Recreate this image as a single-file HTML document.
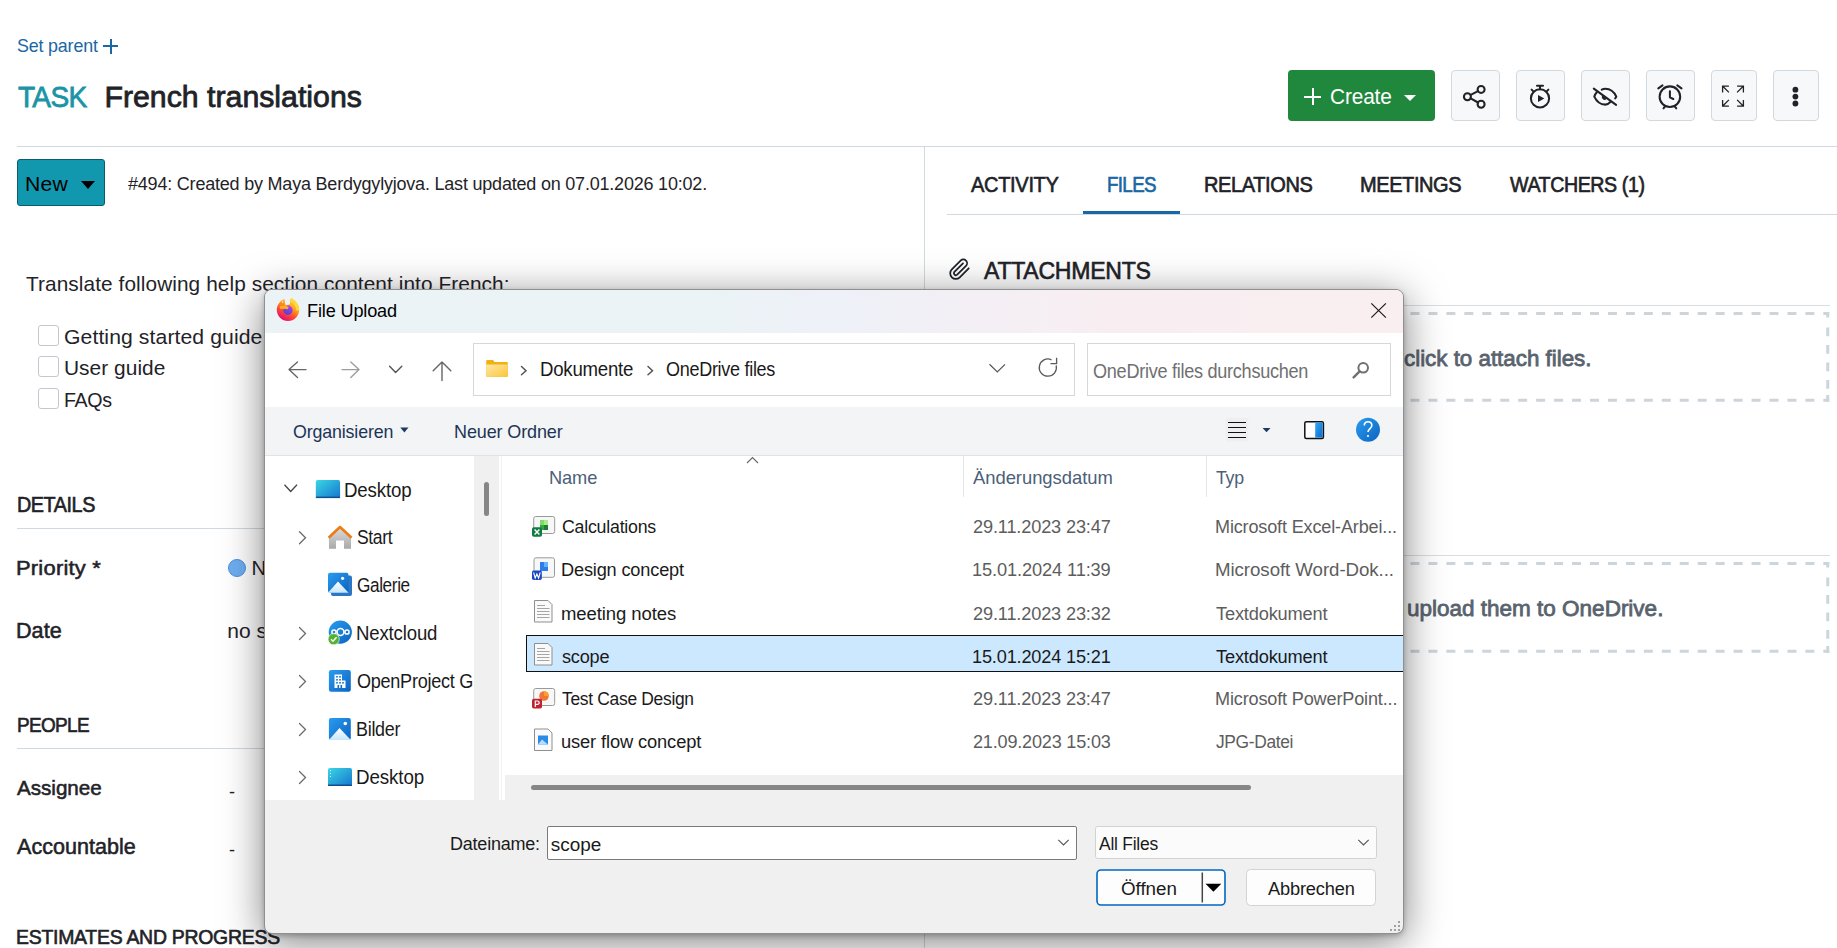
<!DOCTYPE html>
<html><head><meta charset="utf-8"><title>File Upload</title>
<style>
html,body{margin:0;padding:0}
body{width:1837px;height:948px;overflow:hidden;position:relative;background:#fff;font-family:"Liberation Sans",sans-serif}
.t{position:absolute;white-space:pre;font-family:"Liberation Sans",sans-serif}
.a{position:absolute}
.ib{position:absolute;top:70px;width:49px;height:51px;background:#f6f8fa;border:1px solid #d1d9e0;border-radius:4px;box-sizing:border-box}
.ib svg{position:absolute;left:0;top:0}
.cb{position:absolute;left:38px;width:21px;height:21px;box-sizing:border-box;border:1px solid #c2c8ce;border-radius:3px;background:#fff}
.dash{position:absolute;left:947px;width:883px;height:90px;box-sizing:border-box;border:3px dashed #ccd4dc}
#dlg{position:absolute;left:0;top:0;width:1837px;height:948px}
</style></head><body>
<!-- background page -->
<div class="a" style="left:17px;top:146px;width:1820px;height:1px;background:#d1d9e0"></div>
<div class="a" style="left:924px;top:147px;width:1px;height:801px;background:#d1d9e0"></div>
<!-- set parent plus -->
<div class="a" style="left:103px;top:45px;width:15px;height:2px;background:#1a67a3"></div>
<div class="a" style="left:110px;top:39px;width:2px;height:15px;background:#1a67a3"></div>
<!-- New button -->
<div class="a" style="left:17px;top:159px;width:88px;height:47px;box-sizing:border-box;background:#1198af;border:1px solid #0c5d6b;border-radius:3px"></div>
<div class="a" style="left:81px;top:181px;width:0;height:0;border-left:7px solid transparent;border-right:7px solid transparent;border-top:8px solid #000"></div>
<!-- checkboxes -->
<div class="cb" style="top:325px"></div>
<div class="cb" style="top:356px"></div>
<div class="cb" style="top:388px"></div>
<!-- section lines -->
<div class="a" style="left:17px;top:528px;width:890px;height:1px;background:#d1d9e0"></div>
<div class="a" style="left:17px;top:748px;width:890px;height:1px;background:#d1d9e0"></div>
<!-- priority dot -->
<div class="a" style="left:228px;top:559px;width:18px;height:18px;box-sizing:border-box;border-radius:50%;background:#6eaef2;border:1px solid #4a8fdc"></div>
<!-- tabs -->
<div class="a" style="left:947px;top:214px;width:890px;height:1px;background:#d1d9e0"></div>
<div class="a" style="left:1083px;top:211px;width:97px;height:3px;background:#1a67a3"></div>
<!-- paperclip -->
<svg class="a" style="left:0;top:0" width="1000" height="300" viewBox="0 0 1000 300"><path d="M968.7 268.3 L959.76 277.26 A5.6 5.6 0 0 1 951.84 269.34 L960.61 260.57 A3.8 3.8 0 0 1 965.99 265.95 L957.21 274.71 A2 2 0 0 1 954.39 271.89 L963 263.3" fill="none" stroke="#1f2328" stroke-width="1.75" stroke-linecap="round"/></svg>
<!-- attachments areas -->
<div class="a" style="left:947px;top:305px;width:883px;height:1px;background:#d8dee4"></div>
<svg class="a" style="left:0;top:0" width="1837" height="700" viewBox="0 0 1837 700"><g fill="none" stroke="#ccd4dc" stroke-width="3">
<path d="M947 313.5 H1829.25 M947 400.25 H1829.25" stroke-dasharray="8.97 8.98" stroke-dashoffset="-463.5"/>
<path d="M1827.75 312 V402" stroke-dasharray="5.5 10 8.75 8.75 8.75 8.75 8.75 8.75 8.75 6.25 7"/>
<path d="M947 563.5 H1829.25 M947 651.25 H1829.25" stroke-dasharray="8.97 8.98" stroke-dashoffset="-463.5"/>
<path d="M1827.75 562 V653" stroke-dasharray="5.5 10 8.75 8.75 8.75 8.75 8.75 8.75 8.75 7.25 7"/>
</g></svg>
<div class="a" style="left:947px;top:555px;width:883px;height:1px;background:#d8dee4"></div>

<!-- Create button -->
<div class="a" style="left:1288px;top:70px;width:147px;height:51px;background:#1f883d;border-radius:4px"></div>
<div class="a" style="left:1304px;top:96px;width:17px;height:2px;background:#fff"></div>
<div class="a" style="left:1311.5px;top:88px;width:2px;height:17px;background:#fff"></div>
<div class="a" style="left:1404px;top:95px;width:0;height:0;border-left:6px solid transparent;border-right:6px solid transparent;border-top:6px solid #fff"></div>
<!-- icon buttons -->
<div class="ib" style="left:1450.5px;width:49.5px"></div>
<div class="ib" style="left:1515.5px;width:49.5px"></div>
<div class="ib" style="left:1580.5px;width:49.5px"></div>
<div class="ib" style="left:1645.5px;width:49.5px"></div>
<div class="ib" style="left:1710.5px;width:46.5px"></div>
<div class="ib" style="left:1772.5px;width:46px"></div>
<svg class="a" style="left:0;top:0" width="1837" height="150" viewBox="0 0 1837 150">
<g fill="none" stroke="#1f2328" stroke-width="2.05" stroke-linecap="round" stroke-linejoin="round">
 <circle cx="1467.4" cy="96.7" r="3.5"/><circle cx="1481.1" cy="89.4" r="3.5"/><circle cx="1481.1" cy="104.3" r="3.5"/>
 <path d="M1470.7 94.9 L1478 91.1 M1470.7 98.3 L1478 102.5"/>
 <circle cx="1540" cy="98.4" r="9.1"/>
 <path d="M1537 85.8 H1543 M1540 85.8 V89.2 M1531.6 89.6 L1533.6 91.6 M1548.4 89.6 L1546.4 91.6"/>
 <path d="M1593.8 88.6 L1616.1 104.9"/>
 <path d="M1596.8 92.2 C1595.6 93.5 1594.8 95 1594.3 96.6 C1596.6 101.5 1600.8 104.6 1605.3 104.6 C1607.4 104.6 1609.2 103.2 1610.6 101.7"/>
 <path d="M1601.8 89.7 C1603 89 1604.2 88.7 1605.3 88.7 C1610 88.7 1614.2 92 1616.3 96.6 C1616 97.3 1615.6 97.9 1615.2 98.4"/>
 <circle cx="1669.9" cy="96.7" r="10.3"/>
 <path d="M1658.3 88.4 L1662.5 85.4 M1681.5 88.4 L1677.3 85.4 M1663.5 108.3 L1665.3 106.2 M1676.3 108.3 L1674.5 106.2 M1669.9 91.2 V97.3 L1673.3 99"/>
</g>
<path d="M1538 95 L1544.3 98.5 L1538 102 Z" fill="#1f2328"/>
<path d="M1602.4 95.6 A2.6 2.6 0 0 0 1606.6 98.7 Z" fill="#1f2328"/>
<g fill="none" stroke="#1f2328" stroke-width="1.3" stroke-linecap="butt">
 <path d="M1722.6 92.4 V86.1 H1728.9 M1723 86.5 L1728.9 92.4"/>
 <path d="M1743.4 92.4 V86.1 H1737.1 M1743 86.5 L1737.1 92.4"/>
 <path d="M1722.6 99.9 V106.2 H1728.9 M1723 105.8 L1728.9 99.9"/>
 <path d="M1743.4 99.9 V106.2 H1737.1 M1743 105.8 L1737.1 99.9"/>
</g>
<g fill="#1f2328"><circle cx="1795.4" cy="89.7" r="2.9"/><circle cx="1795.4" cy="96.6" r="2.9"/><circle cx="1795.4" cy="103.5" r="2.9"/></g>
</svg>
<div class="t" style="left:17.20px;top:37.10px;font-size:18.57px;line-height:18.57px;color:#1a67a3;letter-spacing:-0.160px;transform:scaleX(0.9605);transform-origin:0 0;">Set parent</div>
<div class="t" style="left:17.60px;top:82.12px;font-size:30.29px;line-height:30.29px;color:#1a94a6;letter-spacing:-0.764px;transform:scaleX(0.9280);transform-origin:0 0;-webkit-text-stroke:0.8px #1a94a6;">TASK</div>
<div class="t" style="left:104.40px;top:82.12px;font-size:30.29px;line-height:30.29px;color:#1f2328;-webkit-text-stroke:0.8px #1f2328;">French translations</div>
<div class="t" style="left:24.58px;top:173.76px;font-size:20.71px;line-height:20.71px;color:#000;letter-spacing:0.200px;transform:scaleX(1.0229);transform-origin:0 0;">New</div>
<div class="t" style="left:128.10px;top:174.21px;font-size:19.14px;line-height:19.14px;color:#1f2328;letter-spacing:-0.223px;transform:scaleX(0.9415);transform-origin:0 0;">#494: Created by Maya Berdygylyjova. Last updated on 07.01.2026 10:02.</div>
<div class="t" style="left:25.60px;top:274.26px;font-size:20.36px;line-height:20.36px;color:#1f2328;letter-spacing:0.084px;transform:scaleX(1.0216);transform-origin:0 0;">Translate following help section content into French:</div>
<div class="t" style="left:63.58px;top:326.76px;font-size:20.71px;line-height:20.71px;color:#1f2328;letter-spacing:0.092px;transform:scaleX(1.0222);transform-origin:0 0;">Getting started guide</div>
<div class="t" style="left:63.59px;top:358.26px;font-size:20.71px;line-height:20.71px;color:#1f2328;letter-spacing:0.040px;transform:scaleX(1.0085);transform-origin:0 0;">User guide</div>
<div class="t" style="left:63.65px;top:390.01px;font-size:20.71px;line-height:20.71px;color:#1f2328;letter-spacing:-0.362px;transform:scaleX(0.9487);transform-origin:0 0;">FAQs</div>
<div class="t" style="left:16.50px;top:495.00px;font-size:21.43px;line-height:21.43px;color:#1f2328;letter-spacing:-0.463px;transform:scaleX(0.9225);transform-origin:0 0;-webkit-text-stroke:0.65px #1f2328;">DETAILS</div>
<div class="t" style="left:16.32px;top:558.01px;font-size:20.71px;line-height:20.71px;color:#1f2328;letter-spacing:0.219px;transform:scaleX(1.0582);transform-origin:0 0;-webkit-text-stroke:0.55px #1f2328;">Priority *</div>
<div class="t" style="left:251.60px;top:557.51px;font-size:20.36px;line-height:20.36px;color:#1f2328;">N</div>
<div class="t" style="left:16.37px;top:620.50px;font-size:21.43px;line-height:21.43px;color:#1f2328;letter-spacing:0.041px;transform:scaleX(1.0067);transform-origin:0 0;-webkit-text-stroke:0.55px #1f2328;">Date</div>
<div class="t" style="left:227.35px;top:619.50px;font-size:21px;line-height:21px;color:#1f2328;">no s</div>
<div class="t" style="left:16.53px;top:713.75px;font-size:21.07px;line-height:21.07px;color:#1f2328;letter-spacing:-0.696px;transform:scaleX(0.8983);transform-origin:0 0;-webkit-text-stroke:0.65px #1f2328;">PEOPLE</div>
<div class="t" style="left:17.38px;top:778.01px;font-size:20.71px;line-height:20.71px;color:#1f2328;letter-spacing:-0.017px;transform:scaleX(0.9967);transform-origin:0 0;-webkit-text-stroke:0.55px #1f2328;">Assignee</div>
<div class="t" style="left:229.10px;top:782.81px;font-size:18px;line-height:18px;color:#1f2328;">-</div>
<div class="t" style="left:17.38px;top:836.75px;font-size:21.43px;line-height:21.43px;color:#1f2328;letter-spacing:0.023px;transform:scaleX(1.0045);transform-origin:0 0;-webkit-text-stroke:0.55px #1f2328;">Accountable</div>
<div class="t" style="left:229.10px;top:841.31px;font-size:18px;line-height:18px;color:#1f2328;">-</div>
<div class="t" style="left:16.47px;top:926.76px;font-size:20.36px;line-height:20.36px;color:#1f2328;letter-spacing:-0.262px;transform:scaleX(0.9536);transform-origin:0 0;-webkit-text-stroke:0.65px #1f2328;">ESTIMATES AND PROGRESS</div>
<div class="t" style="left:971.18px;top:175.00px;font-size:21.43px;line-height:21.43px;color:#1f2328;letter-spacing:-0.363px;transform:scaleX(0.9366);transform-origin:0 0;-webkit-text-stroke:0.65px #1f2328;">ACTIVITY</div>
<div class="t" style="left:1107.05px;top:175.00px;font-size:21.43px;line-height:21.43px;color:#1a67a3;letter-spacing:-0.738px;transform:scaleX(0.8754);transform-origin:0 0;-webkit-text-stroke:0.65px #1a67a3;">FILES</div>
<div class="t" style="left:1203.99px;top:175.00px;font-size:21.43px;line-height:21.43px;color:#1f2328;letter-spacing:-0.408px;transform:scaleX(0.9339);transform-origin:0 0;-webkit-text-stroke:0.65px #1f2328;">RELATIONS</div>
<div class="t" style="left:1359.99px;top:175.00px;font-size:21.43px;line-height:21.43px;color:#1f2328;letter-spacing:-0.437px;transform:scaleX(0.9337);transform-origin:0 0;-webkit-text-stroke:0.65px #1f2328;">MEETINGS</div>
<div class="t" style="left:1510.42px;top:175.00px;font-size:21.43px;line-height:21.43px;color:#1f2328;letter-spacing:-0.472px;transform:scaleX(0.9171);transform-origin:0 0;-webkit-text-stroke:0.65px #1f2328;">WATCHERS (1)</div>
<div class="t" style="left:983.65px;top:258.75px;font-size:23.93px;line-height:23.93px;color:#1f2328;letter-spacing:-0.269px;transform:scaleX(0.9636);transform-origin:0 0;-webkit-text-stroke:0.6px #1f2328;">ATTACHMENTS</div>
<div class="t" style="left:1404.25px;top:347.51px;font-size:22.5px;line-height:22.5px;color:#59636e;letter-spacing:-0.019px;transform:scaleX(0.9951);transform-origin:0 0;-webkit-text-stroke:0.8px #59636e;">click to attach files.</div>
<div class="t" style="left:1407.00px;top:597.60px;font-size:22.5px;line-height:22.5px;color:#59636e;-webkit-text-stroke:0.8px #59636e;">upload them to OneDrive.</div>
<div class="t" style="left:1330.43px;top:87.00px;font-size:21.43px;line-height:21.43px;color:#fff;letter-spacing:-0.143px;transform:scaleX(0.9729);transform-origin:0 0;">Create</div>
<!-- ============ dialog ============ -->
<div id="dlg">
<div class="a" style="left:264px;top:289px;width:1140px;height:645px;box-sizing:border-box;border:1px solid #8f8f8f;border-radius:8px;background:#f0f0f0;overflow:hidden;box-shadow:0 8px 40px rgba(0,0,0,.5),0 2px 5px rgba(0,0,0,.22)">
  <!-- title bar -->
  <div class="a" style="left:0;top:0;width:1138px;height:43px;background:linear-gradient(90deg,#ebf3f6 0%,#ebf3f6 38%,#eef1f8 50%,#f3eff5 62%,#f8eef2 74%,#f9eff0 100%)"></div>
  <!-- nav bar -->
  <div class="a" style="left:0;top:43px;width:1138px;height:74px;background:#fff"></div>
  <!-- command bar -->
  <div class="a" style="left:0;top:117px;width:1138px;height:48px;background:#f3f4f6;border-bottom:1px solid #e3e3e3"></div>
  <!-- nav pane -->
  <div class="a" style="left:0;top:166px;width:209px;height:344px;background:#fff"></div>
  <div class="a" style="left:209px;top:166px;width:25px;height:344px;background:#f0f0f0"></div>
  <div class="a" style="left:219px;top:192px;width:5px;height:34px;background:#868686;border-radius:3px"></div>
  <!-- file list -->
  <div class="a" style="left:234px;top:166px;width:904px;height:319px;background:#fff"></div>
  <div class="a" style="left:234px;top:485px;width:6px;height:25px;background:#fff"></div>
  <div class="a" style="left:236px;top:166px;width:1px;height:344px;background:#f2f2f2"></div>
  <div class="a" style="left:266px;top:495px;width:720px;height:5px;background:#868686;border-radius:3px"></div>
  <div class="a" style="left:698px;top:166px;width:1px;height:41px;background:#e5e5e5"></div>
  <div class="a" style="left:941px;top:166px;width:1px;height:41px;background:#e5e5e5"></div>
  <!-- selection -->
  <div class="a" style="left:261px;top:345px;width:900px;height:37px;box-sizing:border-box;background:#cce8ff;border:1px solid #111"></div>
</div>
<svg class="a" style="left:0;top:0" width="1837" height="948" viewBox="0 0 1837 948">
<defs>
 <radialGradient id="ffring" cx="0.45" cy="0.6" r="0.6"><stop offset="0" stop-color="#ff9a1f"/><stop offset="0.7" stop-color="#ff4a2a"/><stop offset="1" stop-color="#e5216a"/></radialGradient>
 <linearGradient id="ffflame" x1="0" y1="0" x2="0" y2="1"><stop offset="0" stop-color="#ffe640"/><stop offset="1" stop-color="#ffa318"/></linearGradient>
 <radialGradient id="ffcore" cx="0.5" cy="0.4" r="0.6"><stop offset="0" stop-color="#9059ff"/><stop offset="1" stop-color="#6a3ad0"/></radialGradient>
 <linearGradient id="desk" x1="0" y1="0" x2="1" y2="1"><stop offset="0" stop-color="#3ad6e4"/><stop offset="1" stop-color="#1676cf"/></linearGradient>
 <linearGradient id="blueg" x1="0" y1="0" x2="1" y2="1"><stop offset="0" stop-color="#2a9cf0"/><stop offset="1" stop-color="#0b63c0"/></linearGradient>
 <linearGradient id="houseg" x1="0" y1="0" x2="0" y2="1"><stop offset="0" stop-color="#dcdcdc"/><stop offset="1" stop-color="#a9a9a9"/></linearGradient>
 <linearGradient id="folderg" x1="0" y1="0" x2="1" y2="1"><stop offset="0" stop-color="#fde7a6"/><stop offset="1" stop-color="#fcc63a"/></linearGradient>
 <linearGradient id="mtn" x1="0" y1="0" x2="0" y2="1"><stop offset="0" stop-color="#ffffff"/><stop offset="1" stop-color="#c9e6fb"/></linearGradient>
 <linearGradient id="pane" x1="0" y1="0" x2="1" y2="1"><stop offset="0" stop-color="#35a9f2"/><stop offset="1" stop-color="#0a6acd"/></linearGradient>
</defs>
<!-- firefox -->
<defs>
 <linearGradient id="ffr" x1="0.85" y1="0.05" x2="0.3" y2="0.95"><stop offset="0" stop-color="#ffe54a"/><stop offset="0.38" stop-color="#ffa01c"/><stop offset="0.68" stop-color="#ff4a35"/><stop offset="1" stop-color="#e2106c"/></linearGradient>
 <linearGradient id="ffc" x1="0.7" y1="0" x2="0.3" y2="1"><stop offset="0" stop-color="#b43ee8"/><stop offset="1" stop-color="#5240cf"/></linearGradient>
</defs>
<circle cx="288" cy="309.8" r="11.2" fill="url(#ffr)"/>
<path d="M284.3 298 L290.6 298 C290 300.5 289.8 302.5 290 304.3 C288.5 304.6 287 304.8 285.6 305.4 C285.2 303.5 284.8 301.5 284.3 298 Z" fill="#ecf3f8"/><path d="M281.8 299.5 L283.2 302.8 L282 303.2 Z" fill="#ecf3f8"/>
<path d="M291.3 298 C295.5 300.5 299.6 305 299.2 310.5 L296.3 310.5 C296 306 293.8 303 290.2 302 C290 300.5 290.5 299 291.3 298 Z" fill="#ffd83c"/>
<circle cx="287.9" cy="310.3" r="4.7" fill="url(#ffc)"/>
<path d="M279.6 306.6 C282 305.6 286 305.4 288.8 307.2 L287.6 309.3 C285.6 308.6 282.5 308.6 280.3 309.2 Z" fill="#ffb01e"/>
<path d="M279.6 303.2 L280.4 301.5 L281.6 303.5 L283.2 302.8 L284 304.8 L280 306 Z" fill="#ff8a10"/>
<!-- close X -->
<path d="M1371.3 303.4 L1385.9 317.6 M1385.9 303.4 L1371.3 317.6" stroke="#1a1a1a" stroke-width="1.2"/>
<!-- nav arrows -->
<g fill="none" stroke-width="1.4" stroke-linecap="round" stroke-linejoin="round">
 <path d="M289 369.6 H306 M297.5 362 L289 369.6 L297.5 377.5" stroke="#666"/>
 <path d="M342 369.6 H359 M350.8 362 L359 369.6 L350.8 377.5" stroke="#9d9d9d"/>
 <path d="M389.6 366.3 L395.6 372.5 L401.8 366.3" stroke="#555"/>
 <path d="M442 362 V380.5 M433.2 370.8 L442 362 L450.8 370.8" stroke="#666"/>
</g>
<!-- address box & search box -->
<rect x="473.5" y="343.5" width="601" height="52" fill="#fff" stroke="#d7d7d7"/>
<rect x="1087.5" y="343.5" width="303" height="52" fill="#fff" stroke="#d7d7d7"/>
<!-- folder -->
<path d="M486.2 361 a1 1 0 0 1 1 -1 H493 l1.6 2 H507 a0.8 0.8 0 0 1 0.8 0.8 V376 a0.8 0.8 0 0 1 -0.8 0.8 H487 a0.8 0.8 0 0 1 -0.8 -0.8 Z" fill="#f3b10f"/>
<path d="M486.2 364.5 H507.8 V376 a0.8 0.8 0 0 1 -0.8 0.8 H487 a0.8 0.8 0 0 1 -0.8 -0.8 Z" fill="url(#folderg)"/>
<g fill="none" stroke="#555" stroke-width="1.5" stroke-linecap="round">
 <path d="M521.5 366.5 L526 370.7 L521.5 374.8"/>
 <path d="M648 366.5 L652.5 370.7 L648 374.8"/>
</g>
<path d="M989.5 364.3 L997.3 372 L1005 364.3" fill="none" stroke="#555" stroke-width="1.2"/>
<path d="M1056.2 365.5 A8.6 8.6 0 1 1 1051.5 359.8" fill="none" stroke="#5a5a5a" stroke-width="1.3"/>
<path d="M1050.5 363.6 H1056.6 V357.8" fill="none" stroke="#5a5a5a" stroke-width="1.3"/>
<circle cx="1363.2" cy="367.8" r="4.8" fill="none" stroke="#707070" stroke-width="2"/>
<path d="M1359.6 371.4 L1353.6 377.4" stroke="#707070" stroke-width="2.4" stroke-linecap="round"/>
<!-- command bar icons -->
<path d="M400.3 427.6 H408.5 L404.4 432.6 Z" fill="#1f3a60"/>
<rect x="1225.5" y="417.5" width="23" height="24" rx="3" fill="#efeff1"/>
<path d="M1228 422.5 H1246 M1228 427.5 H1246 M1228 432.5 H1246 M1228 437.5 H1246" stroke="#111" stroke-width="1.1"/>
<path d="M1262.6 427.9 H1270.5 L1266.55 432.3 Z" fill="#1f3a60"/>
<rect x="1304.8" y="421.8" width="18.6" height="16.6" rx="1.5" fill="#fff" stroke="#111" stroke-width="1.5"/>
<rect x="1315.2" y="422.6" width="7.4" height="15" fill="url(#pane)"/>
<path d="M1315 422.5 V438" stroke="#111" stroke-width="0"/>
<circle cx="1368" cy="429.8" r="12" fill="url(#blueg)"/>
<path d="M1364.3 425.5 C1364.3 420.5 1371.8 420.5 1371.8 425.5 C1371.8 428.5 1368 428.8 1368 432" fill="none" stroke="#fff" stroke-width="1.6"/>
<circle cx="1368" cy="436" r="1.1" fill="#fff"/>
<!-- nav pane -->
<path d="M284.5 484.8 L290.7 491.5 L297 484.8" fill="none" stroke="#444" stroke-width="1.3"/>
<g fill="none" stroke="#6a6a6a" stroke-width="1.3" stroke-linecap="round">
 <path d="M299.5 531.8 L305.5 537.8 L299.5 543.8"/>
 <path d="M299.5 627.5 L305.5 633.5 L299.5 639.5"/>
 <path d="M299.5 675.5 L305.5 681.5 L299.5 687.5"/>
 <path d="M299.5 723.5 L305.5 729.5 L299.5 735.5"/>
 <path d="M299.5 771.5 L305.5 777.5 L299.5 783.5"/>
</g>
<rect x="315.8" y="480" width="24.3" height="18" rx="2" fill="url(#desk)"/>
<rect x="315.8" y="496.6" width="24.3" height="1.5" fill="#0e4f90"/>
<!-- home -->
<path d="M329 536.5 V548.8 H336 V540.5 H344 V548.8 H351 V536.5 L340 527.5 Z" fill="url(#houseg)"/>
<path d="M328.6 537.8 L340 527 L351.6 537.8" fill="none" stroke="#ee7b14" stroke-width="2.6" stroke-linejoin="round"/>
<!-- galerie -->
<rect x="331" y="575.5" width="21" height="20.5" rx="2" fill="#2b77c6"/>
<rect x="328" y="572.7" width="20.5" height="20" rx="2" fill="url(#blueg)"/>
<path d="M328 592.7 L338 581.5 L348.5 592.7 Z" fill="url(#mtn)"/>
<circle cx="342.6" cy="578.3" r="1.6" fill="#fff"/>
<!-- nextcloud -->
<circle cx="340.3" cy="632.1" r="11.6" fill="url(#blueg)"/>
<g fill="none" stroke="#fff" stroke-width="1.5"><circle cx="340.5" cy="632" r="3.4"/><circle cx="334" cy="632" r="2.1"/><circle cx="347" cy="632" r="2.1"/></g>
<circle cx="333.7" cy="639.2" r="5.6" fill="#56b132" stroke="#fff" stroke-width="0.6"/>
<path d="M331 639.3 L333 641.3 L336.6 637.3" fill="none" stroke="#fff" stroke-width="1.3"/>
<!-- openproject -->
<rect x="328.9" y="670.1" width="21.9" height="21.6" rx="2.2" fill="url(#blueg)"/>
<path d="M334.5 674.5 H342 V680.5 H345.5 V688 H334.5 Z" fill="#fff"/>
<g fill="#1272c8"><rect x="336.2" y="676" width="1.6" height="1.6"/><rect x="339.2" y="676" width="1.6" height="1.6"/><rect x="336.2" y="679" width="1.6" height="1.6"/><rect x="339.2" y="679" width="1.6" height="1.6"/><rect x="336.2" y="682" width="1.6" height="1.6"/><rect x="339.2" y="682" width="1.6" height="1.6"/><rect x="342.2" y="682" width="1.6" height="1.6"/><rect x="337.5" y="685" width="1.6" height="3"/><rect x="340.5" y="685" width="1.6" height="3"/></g>
<!-- bilder -->
<rect x="328.9" y="718" width="21.9" height="22" rx="2" fill="url(#blueg)"/>
<path d="M328.9 740 L339.5 728 L350.8 740 Z" fill="url(#mtn)"/>
<circle cx="345.3" cy="723.5" r="1.8" fill="#fff"/>
<!-- desktop 2 -->
<rect x="328" y="768" width="24" height="18" rx="2" fill="url(#desk)"/>
<rect x="328" y="784.5" width="24" height="1.5" fill="#0e4f90"/>
<g fill="#fff"><rect x="330" y="770" width="1" height="1"/><rect x="330" y="773" width="1" height="1"/><rect x="330" y="776" width="1" height="1"/></g>
<!-- sort caret -->
<path d="M747 463 L752.5 457.5 L758 463" fill="none" stroke="#666" stroke-width="1.1"/>
<!-- file icons -->
<g>
 <rect x="533.7" y="516.5" width="21" height="17" rx="2" fill="#f7f7f7" stroke="#9a9a9a"/>
 <rect x="540" y="520" width="4" height="5" fill="#7fdc6a"/><rect x="544" y="520" width="4" height="5" fill="#a7ef85"/><rect x="540" y="525" width="4" height="5" fill="#33a845"/><rect x="544" y="525" width="4" height="5" fill="#1e7d35"/>
 <rect x="532" y="527.2" width="10" height="9.6" rx="1.8" fill="#107c41"/>
 <path d="M534.6 529.5 L539.4 534.5 M539.4 529.5 L534.6 534.5" stroke="#fff" stroke-width="1.4"/>
</g>
<g>
 <rect x="534" y="557.8" width="20.5" height="19.5" rx="2" fill="#f7f7f7" stroke="#9a9a9a"/>
 <rect x="540" y="562" width="8" height="9" fill="#2f7ce8"/><rect x="544" y="562" width="4" height="5" fill="#5fb4ff"/>
 <rect x="532" y="570.5" width="9.8" height="9.5" rx="1.8" fill="#1847c2"/>
 <path d="M533.6 572.5 L535.2 578 L536.9 574 L538.6 578 L540.2 572.5" fill="none" stroke="#fff" stroke-width="1.1"/>
</g>
<g id="txtdoc">
 <path d="M534.5 600.5 H548 L552 604.5 V622 H534.5 Z" fill="#fafafa" stroke="#8f8f8f"/>
 <path d="M537 605.5 H545 M537 608.5 H549.5 M537 611.5 H549.5 M537 614.5 H549.5 M537 617.5 H549.5" stroke="#a5a5a5" stroke-width="1"/>
</g>
<g transform="translate(0,43)">
 <path d="M534.5 600.5 H548 L552 604.5 V622 H534.5 Z" fill="#fafafa" stroke="#8f8f8f"/>
 <path d="M537 605.5 H545 M537 608.5 H549.5 M537 611.5 H549.5 M537 614.5 H549.5 M537 617.5 H549.5" stroke="#a5a5a5" stroke-width="1"/>
</g>
<g>
 <rect x="533.7" y="688.5" width="21" height="17" rx="2" fill="#f7f7f7" stroke="#9a9a9a"/>
 <circle cx="544" cy="696" r="4.8" fill="#f3743a"/><path d="M544 696 V691.2 A4.8 4.8 0 0 1 548.8 696 Z" fill="#ff9f2a"/>
 <rect x="532" y="698.8" width="10" height="9.8" rx="1.8" fill="#c0232f"/>
 <path d="M535.3 707 V701 H537.5 A1.7 1.7 0 0 1 537.5 704.4 H535.3" fill="none" stroke="#fff" stroke-width="1.2"/>
</g>
<g>
 <path d="M534.5 729 H548 L552 733 V750.5 H534.5 Z" fill="#fafafa" stroke="#8f8f8f"/>
 <rect x="538" y="735.5" width="10" height="9" fill="#2a8be6"/>
 <path d="M538 744.5 L542 739.5 L548 744.5 Z" fill="#b8ddfb"/>
</g>
<!-- bottom inputs -->
<rect x="547.5" y="826.5" width="529" height="33" rx="1.5" fill="#fff" stroke="#7a7a7a"/>
<path d="M1058.3 839.8 L1063.5 845 L1068.7 839.8" fill="none" stroke="#555" stroke-width="1.1"/>
<rect x="1095.5" y="826.5" width="281" height="32" rx="2" fill="#fbfbfb" stroke="#d2d2d2"/>
<path d="M1358.3 839.8 L1363.5 845 L1368.7 839.8" fill="none" stroke="#555" stroke-width="1.1"/>
<rect x="1097" y="870" width="128" height="35" rx="4" fill="#fdfdfd" stroke="#0067c0" stroke-width="1.6"/>
<path d="M1202.3 872.5 V902.5" stroke="#444" stroke-width="1.5"/>
<path d="M1205.5 883.8 H1221.3 L1213.4 891.8 Z" fill="#000"/>
<rect x="1246.5" y="869.5" width="129" height="36" rx="4" fill="#fdfdfd" stroke="#d3d3d3"/>
<g fill="#a0a0a0"><rect x="1398" y="921" width="2" height="2"/><rect x="1398" y="925" width="2" height="2"/><rect x="1394" y="925" width="2" height="2"/><rect x="1398" y="929" width="2" height="2"/><rect x="1394" y="929" width="2" height="2"/><rect x="1390" y="929" width="2" height="2"/></g>
</svg>

<div class="t" style="left:307.39px;top:302.00px;font-size:18.93px;line-height:18.93px;color:#000;letter-spacing:-0.166px;transform:scaleX(0.9581);transform-origin:0 0;">File Upload</div>
<div class="t" style="left:539.65px;top:360.26px;font-size:19.64px;line-height:19.64px;color:#1a1a1a;letter-spacing:-0.258px;transform:scaleX(0.9504);transform-origin:0 0;">Dokumente</div>
<div class="t" style="left:666.10px;top:360.26px;font-size:19.64px;line-height:19.64px;color:#1a1a1a;letter-spacing:-0.321px;transform:scaleX(0.9182);transform-origin:0 0;">OneDrive files</div>
<div class="t" style="left:1093.35px;top:361.51px;font-size:19.64px;line-height:19.64px;color:#707070;letter-spacing:-0.307px;transform:scaleX(0.9229);transform-origin:0 0;">OneDrive files durchsuchen</div>
<div class="t" style="left:293.10px;top:423.01px;font-size:18.57px;line-height:18.57px;color:#1c3557;letter-spacing:-0.161px;transform:scaleX(0.9604);transform-origin:0 0;">Organisieren</div>
<div class="t" style="left:453.88px;top:423.01px;font-size:18.57px;line-height:18.57px;color:#1c3557;letter-spacing:-0.130px;transform:scaleX(0.9700);transform-origin:0 0;">Neuer Ordner</div>
<div class="t" style="left:344.38px;top:480.51px;font-size:19.29px;line-height:19.29px;color:#1a1a1a;letter-spacing:-0.148px;transform:scaleX(0.9696);transform-origin:0 0;">Desktop</div>
<div class="t" style="left:357.10px;top:527.76px;font-size:19.29px;line-height:19.29px;color:#1a1a1a;letter-spacing:-0.387px;transform:scaleX(0.9092);transform-origin:0 0;">Start</div>
<div class="t" style="left:357.10px;top:576.01px;font-size:19.29px;line-height:19.29px;color:#1a1a1a;letter-spacing:-0.447px;transform:scaleX(0.8936);transform-origin:0 0;">Galerie</div>
<div class="t" style="left:356.14px;top:624.01px;font-size:19.29px;line-height:19.29px;color:#1a1a1a;letter-spacing:-0.158px;transform:scaleX(0.9643);transform-origin:0 0;">Nextcloud</div>
<div class="t" style="left:357.10px;top:672.01px;font-size:19.29px;line-height:19.29px;color:#1a1a1a;letter-spacing:-0.281px;transform:scaleX(0.9362);transform-origin:0 0;clip-path:inset(-10px calc(100% - 124.3px) -10px -10px);">OpenProject G</div>
<div class="t" style="left:356.17px;top:720.26px;font-size:19.29px;line-height:19.29px;color:#1a1a1a;letter-spacing:-0.286px;transform:scaleX(0.9296);transform-origin:0 0;">Bilder</div>
<div class="t" style="left:356.13px;top:768.26px;font-size:19.29px;line-height:19.29px;color:#1a1a1a;letter-spacing:-0.125px;transform:scaleX(0.9743);transform-origin:0 0;">Desktop</div>
<div class="t" style="left:549.12px;top:469.26px;font-size:18.57px;line-height:18.57px;color:#4c6079;letter-spacing:-0.114px;transform:scaleX(0.9833);transform-origin:0 0;">Name</div>
<div class="t" style="left:972.60px;top:469.26px;font-size:18.57px;line-height:18.57px;color:#4c6079;letter-spacing:-0.037px;transform:scaleX(0.9920);transform-origin:0 0;">Änderungsdatum</div>
<div class="t" style="left:1216.10px;top:469.26px;font-size:18.57px;line-height:18.57px;color:#4c6079;letter-spacing:-0.269px;transform:scaleX(0.9567);transform-origin:0 0;">Typ</div>
<div class="t" style="left:562.10px;top:518.25px;font-size:18.93px;line-height:18.93px;color:#1a1a1a;letter-spacing:-0.240px;transform:scaleX(0.9383);transform-origin:0 0;">Calculations</div>
<div class="t" style="left:972.60px;top:518.25px;font-size:18.93px;line-height:18.93px;color:#5d5d5d;letter-spacing:-0.162px;transform:scaleX(0.9604);transform-origin:0 0;">29.11.2023 23:47</div>
<div class="t" style="left:1215.15px;top:518.25px;font-size:18.93px;line-height:18.93px;color:#5d5d5d;letter-spacing:-0.161px;transform:scaleX(0.9541);transform-origin:0 0;">Microsoft Excel-Arbei...</div>
<div class="t" style="left:561.14px;top:561.25px;font-size:18.93px;line-height:18.93px;color:#1a1a1a;letter-spacing:-0.170px;transform:scaleX(0.9597);transform-origin:0 0;">Design concept</div>
<div class="t" style="left:971.63px;top:561.25px;font-size:18.93px;line-height:18.93px;color:#5d5d5d;letter-spacing:-0.142px;transform:scaleX(0.9652);transform-origin:0 0;">15.01.2024 11:39</div>
<div class="t" style="left:1215.11px;top:561.25px;font-size:18.93px;line-height:18.93px;color:#5d5d5d;letter-spacing:-0.053px;transform:scaleX(0.9862);transform-origin:0 0;">Microsoft Word-Dok...</div>
<div class="t" style="left:561.12px;top:604.50px;font-size:18.93px;line-height:18.93px;color:#1a1a1a;letter-spacing:-0.090px;transform:scaleX(0.9783);transform-origin:0 0;">meeting notes</div>
<div class="t" style="left:972.60px;top:604.50px;font-size:18.93px;line-height:18.93px;color:#5d5d5d;letter-spacing:-0.162px;transform:scaleX(0.9604);transform-origin:0 0;">29.11.2023 23:32</div>
<div class="t" style="left:1216.10px;top:604.50px;font-size:18.93px;line-height:18.93px;color:#5d5d5d;letter-spacing:-0.170px;transform:scaleX(0.9625);transform-origin:0 0;">Textdokument</div>
<div class="t" style="left:562.10px;top:647.50px;font-size:18.93px;line-height:18.93px;color:#1a1a1a;letter-spacing:-0.219px;transform:scaleX(0.9584);transform-origin:0 0;">scope</div>
<div class="t" style="left:971.64px;top:647.50px;font-size:18.93px;line-height:18.93px;color:#1a1a1a;letter-spacing:-0.170px;transform:scaleX(0.9585);transform-origin:0 0;">15.01.2024 15:21</div>
<div class="t" style="left:1216.10px;top:647.50px;font-size:18.93px;line-height:18.93px;color:#1a1a1a;letter-spacing:-0.170px;transform:scaleX(0.9625);transform-origin:0 0;">Textdokument</div>
<div class="t" style="left:562.10px;top:690.25px;font-size:18.93px;line-height:18.93px;color:#1a1a1a;letter-spacing:-0.324px;transform:scaleX(0.9206);transform-origin:0 0;">Test Case Design</div>
<div class="t" style="left:972.60px;top:690.25px;font-size:18.93px;line-height:18.93px;color:#5d5d5d;letter-spacing:-0.162px;transform:scaleX(0.9604);transform-origin:0 0;">29.11.2023 23:47</div>
<div class="t" style="left:1215.14px;top:690.25px;font-size:18.93px;line-height:18.93px;color:#5d5d5d;letter-spacing:-0.163px;transform:scaleX(0.9555);transform-origin:0 0;">Microsoft PowerPoint...</div>
<div class="t" style="left:561.13px;top:733.00px;font-size:18.93px;line-height:18.93px;color:#1a1a1a;letter-spacing:-0.130px;transform:scaleX(0.9665);transform-origin:0 0;">user flow concept</div>
<div class="t" style="left:972.60px;top:733.00px;font-size:18.93px;line-height:18.93px;color:#5d5d5d;letter-spacing:-0.190px;transform:scaleX(0.9539);transform-origin:0 0;">21.09.2023 15:03</div>
<div class="t" style="left:1216.10px;top:733.00px;font-size:18.93px;line-height:18.93px;color:#5d5d5d;letter-spacing:-0.366px;transform:scaleX(0.9177);transform-origin:0 0;">JPG-Datei</div>
<div class="t" style="left:449.55px;top:835.11px;font-size:18.93px;line-height:18.93px;color:#1a1a1a;letter-spacing:-0.220px;transform:scaleX(0.9500);transform-origin:0 0;">Dateiname:</div>
<div class="t" style="left:550.85px;top:835.75px;font-size:18.93px;line-height:18.93px;color:#1a1a1a;">scope</div>
<div class="t" style="left:1099.10px;top:834.50px;font-size:18.93px;line-height:18.93px;color:#1a1a1a;letter-spacing:-0.262px;transform:scaleX(0.9233);transform-origin:0 0;">All Files</div>
<div class="t" style="left:1120.85px;top:880.00px;font-size:18.93px;line-height:18.93px;color:#1a1a1a;letter-spacing:-0.038px;transform:scaleX(0.9920);transform-origin:0 0;">Öffnen</div>
<div class="t" style="left:1267.85px;top:880.00px;font-size:18.93px;line-height:18.93px;color:#1a1a1a;letter-spacing:-0.176px;transform:scaleX(0.9633);transform-origin:0 0;">Abbrechen</div>
</div>
</body></html>
